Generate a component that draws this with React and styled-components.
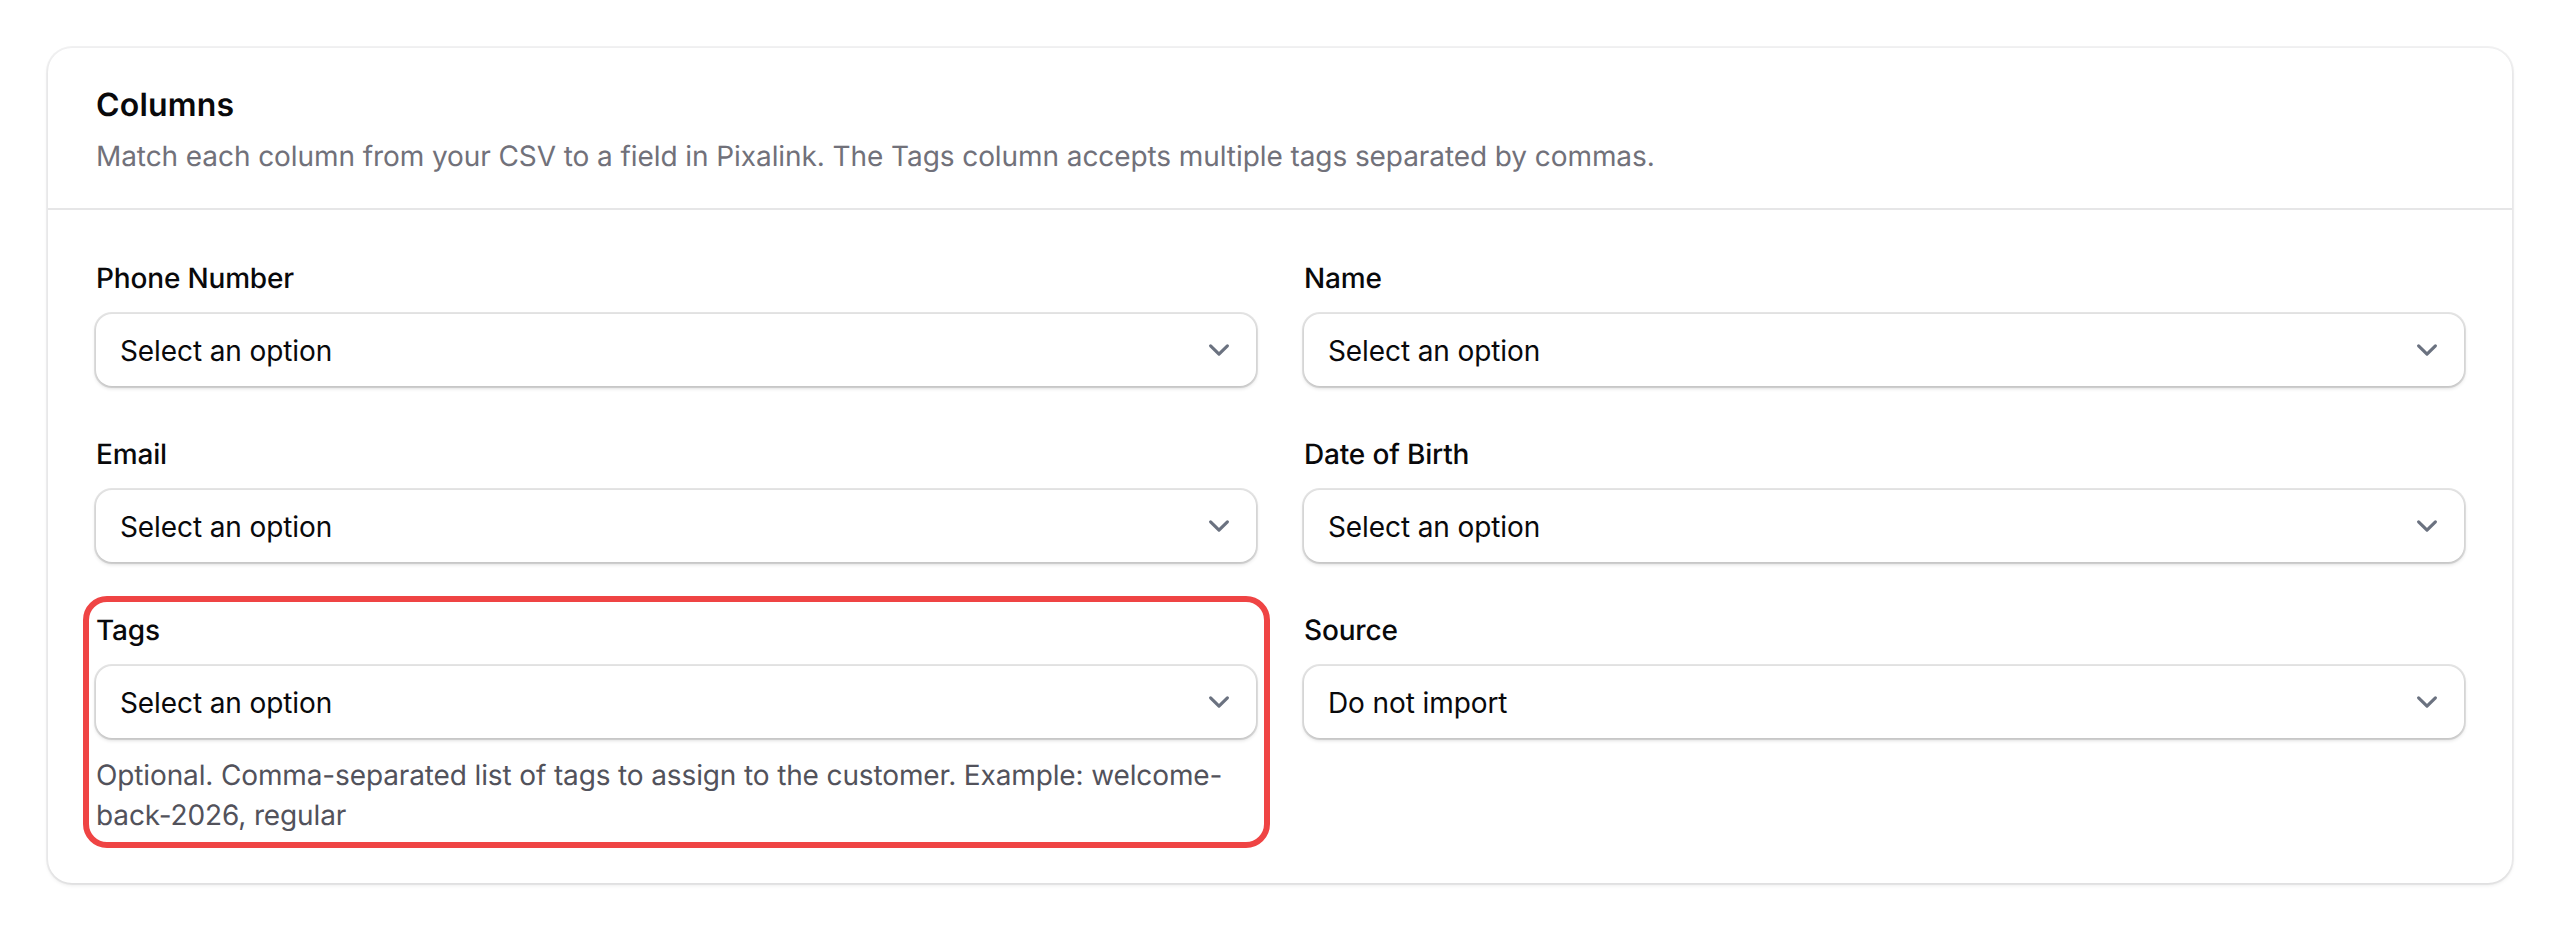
import React from "react";
import styled, { createGlobalStyle } from "styled-components";

const GlobalStyle = createGlobalStyle`
  html, body {
    margin: 0;
    padding: 0;
    background: #fff;
  }

  body {
    font-family: Inter, "Noto Sans", sans-serif;
    color: #09090b;
    text-rendering: geometricPrecision;
  }
`;

const Page = styled.div`
  padding: 48px;
`;

const Card = styled.section`
  background: #fff;
  border-radius: 24px;
  box-shadow: 0 0 0 2px rgba(9, 9, 11, 0.05), 0 2px 4px rgba(0, 0, 0, 0.1);
`;

const CardHeader = styled.header`
  padding: 32px 48px;
  border-bottom: 2px solid #e6e6e7;
  display: flex;
  flex-direction: column;
  gap: 8px;
`;

const Title = styled.h2`
  margin: 0;
  padding-top: 2px;
  font-size: 32px;
  line-height: 46px;
  font-weight: 600;
  letter-spacing: 0.2px;
  color: #09090b;
`;

const Description = styled.p`
  margin: 0;
  font-size: 28px;
  line-height: 40px;
  letter-spacing: -0.08px;
  color: #71717a;
`;

const CardBody = styled.div`
  padding: 48px;
  display: grid;
  grid-template-columns: 1fr 1fr;
  gap: 48px;
  align-items: start;
`;

const Field = styled.div`
  position: relative;
  display: flex;
  flex-direction: column;
  gap: 16px;
`;

const Highlight = styled.div`
  position: absolute;
  inset: -14px -14px -13px -13px;
  border: 6px solid #ef4444;
  border-radius: 24px;
  pointer-events: none;
`;

const Label = styled.label`
  font-size: 28px;
  line-height: 40px;
  font-weight: 500;
  letter-spacing: -0.17px;
  color: #09090b;
`;

const SelectBox = styled.button`
  display: flex;
  align-items: center;
  justify-content: space-between;
  width: 100%;
  height: 72px;
  padding: 0 16px 0 24px;
  border: 0;
  border-radius: 16px;
  background: #fff;
  font-family: inherit;
  font-size: 28px;
  line-height: 40px;
  letter-spacing: -0.1px;
  color: #09090b;
  box-shadow: 0 0 0 2px rgba(9, 9, 11, 0.1), 0 2px 4px rgba(0, 0, 0, 0.18);
`;

const SelectValue = styled.span`
  padding-top: 2px;
`;

const Chevron = styled.svg`
  width: 42px;
  height: 42px;
  flex-shrink: 0;
  fill: none;
  stroke: #6b7280;
  stroke-width: 1.5;
  stroke-linecap: round;
  stroke-linejoin: round;
`;

const Help = styled.p`
  margin: 0;
  padding-top: 1px;
  font-size: 28px;
  line-height: 40px;
  letter-spacing: -0.13px;
  color: #52525b;
`;

const fields = [
  { label: "Phone Number", value: "Select an option" },
  { label: "Name", value: "Select an option" },
  { label: "Email", value: "Select an option" },
  { label: "Date of Birth", value: "Select an option" },
  {
    label: "Tags",
    value: "Select an option",
    help: "Optional. Comma-separated list of tags to assign to the customer. Example: welcome-back-2026, regular",
    highlighted: true,
  },
  { label: "Source", value: "Do not import" },
];

export default function App() {
  return (
    <Page>
      <GlobalStyle />
      <Card>
        <CardHeader>
          <Title>Columns</Title>
          <Description>
            Match each column from your CSV to a field in Pixalink. The Tags
            column accepts multiple tags separated by commas.
          </Description>
        </CardHeader>
        <CardBody>
          {fields.map((field) => (
            <Field key={field.label}>
              <Label>{field.label}</Label>
              <SelectBox type="button">
                <SelectValue>{field.value}</SelectValue>
                <Chevron viewBox="0 0 20 20">
                  <path d="M6 8l4 4 4-4" />
                </Chevron>
              </SelectBox>
              {field.help && <Help>{field.help}</Help>}
              {field.highlighted && <Highlight />}
            </Field>
          ))}
        </CardBody>
      </Card>
    </Page>
  );
}
